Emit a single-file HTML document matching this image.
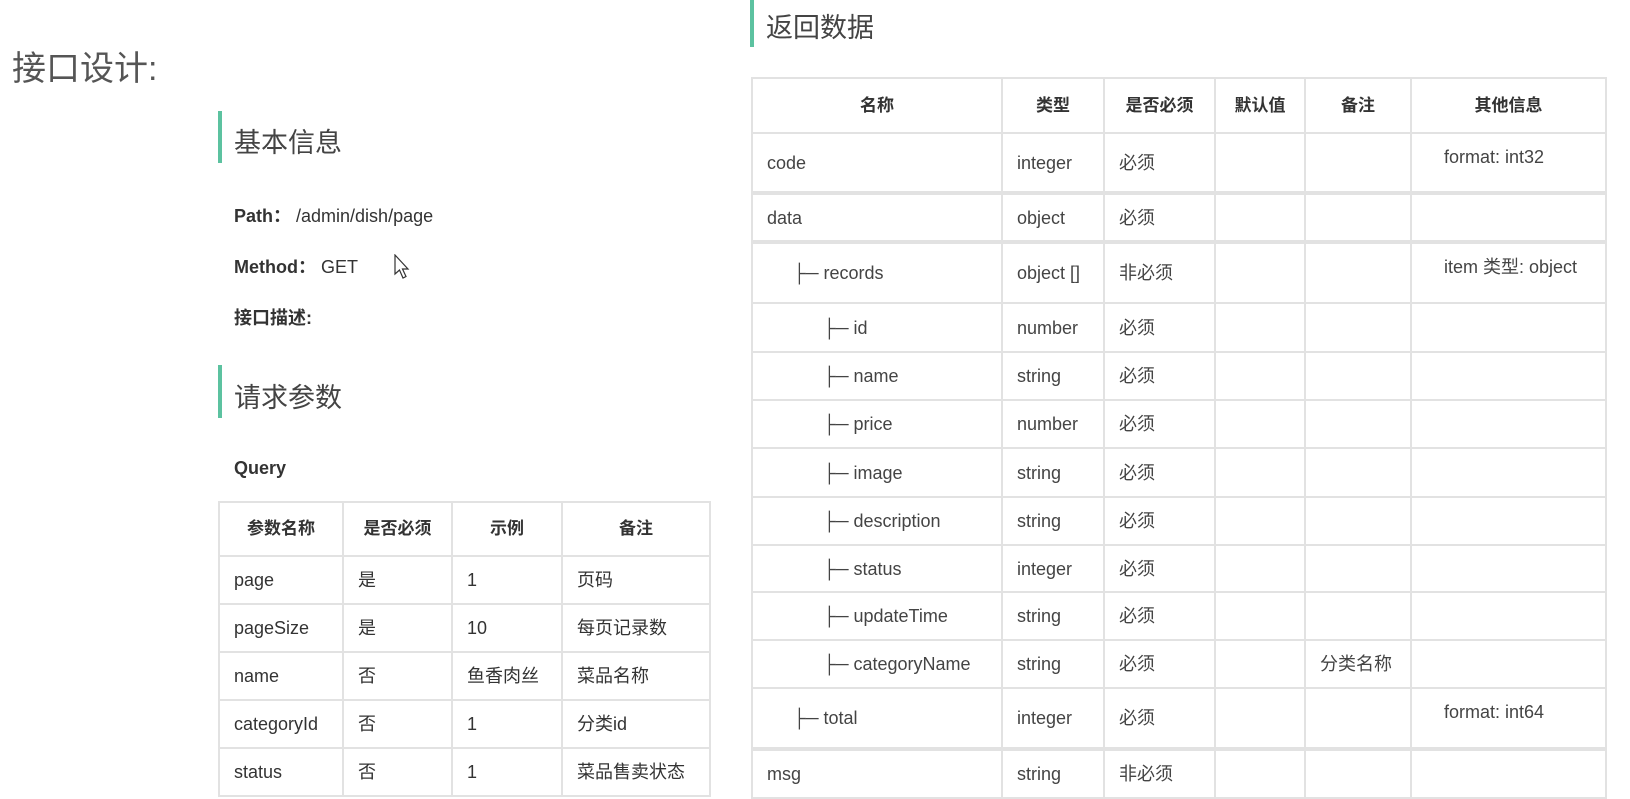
<!DOCTYPE html>
<html><head><meta charset="utf-8"><style>
body{margin:0;width:1630px;height:797px;background:#fff;overflow:hidden;position:relative;font-family:"Liberation Sans","Noto Sans CJK SC",sans-serif;color:#333}
.a{position:absolute;white-space:nowrap}
.bar{position:absolute;width:4px;background:#5cc2a0}
table{position:absolute;border-collapse:collapse;table-layout:fixed}
td,th{border:2px solid #e2e2e2;font-size:18px;line-height:22px;color:#333;padding:0 0 0 14px;text-align:left;white-space:nowrap;vertical-align:middle}
th{text-align:center;padding:0;font-weight:bold;font-size:17px}
.t2 td{font-size:18px;color:#444}
.top{vertical-align:top;padding-top:12px;padding-left:32px}
.thick td{border-top:4px solid #e2e2e2}
</style></head><body>
<div class="a" style="left:12px;top:41px;font-size:34px;color:#555">接口设计:</div>
<div class="bar" style="left:218px;top:111px;height:52px"></div>
<div class="a" style="left:234px;top:121px;font-size:27px;color:#444">基本信息</div>
<div class="a" style="left:234px;top:202px;font-size:18px"><b>Path：</b>&nbsp;/admin/dish/page</div>
<div class="a" style="left:234px;top:253px;font-size:18px"><b>Method：</b>&nbsp;GET</div>
<svg class="a" style="left:394px;top:254px" width="20" height="28" viewBox="0 0 20 28"><path d="M1 1 L1 20 L5.5 16 L9 24 L12 22.5 L8.5 15 L14 15 Z" fill="#fff" stroke="#333" stroke-width="1.2"/></svg>
<div class="a" style="left:234px;top:304px;font-size:18px;font-weight:bold">接口描述:</div>
<div class="bar" style="left:218px;top:365px;height:53px"></div>
<div class="a" style="left:234px;top:376px;font-size:27px;color:#444">请求参数</div>
<div class="a" style="left:234px;top:458px;font-size:18px;font-weight:bold">Query</div>
<table style="left:218px;top:501px;width:491px">
<colgroup><col style="width:124px"><col style="width:109px"><col style="width:110px"><col style="width:148px"></colgroup>
<tr style="height:54px"><th>参数名称</th><th>是否必须</th><th>示例</th><th>备注</th></tr>
<tr style="height:48px"><td>page</td><td>是</td><td>1</td><td>页码</td></tr>
<tr style="height:48px"><td>pageSize</td><td>是</td><td>10</td><td>每页记录数</td></tr>
<tr style="height:48px"><td>name</td><td>否</td><td>鱼香肉丝</td><td>菜品名称</td></tr>
<tr style="height:48px"><td>categoryId</td><td>否</td><td>1</td><td>分类id</td></tr>
<tr style="height:48px"><td>status</td><td>否</td><td>1</td><td>菜品售卖状态</td></tr>
</table>
<div class="bar" style="left:750px;top:0;height:47px"></div>
<div class="a" style="left:766px;top:6px;font-size:27px;color:#444">返回数据</div>
<table class="t2" style="left:751px;top:77px;width:854px">
<colgroup><col style="width:250px"><col style="width:102px"><col style="width:111px"><col style="width:90px"><col style="width:106px"><col style="width:195px"></colgroup>
<tr style="height:55px"><th>名称</th><th>类型</th><th>是否必须</th><th>默认值</th><th>备注</th><th>其他信息</th></tr>
<tr style="height:60px"><td>code</td><td>integer</td><td>必须</td><td></td><td></td><td class="top">format: int32</td></tr>
<tr class="thick" style="height:49px"><td>data</td><td>object</td><td>必须</td><td></td><td></td><td></td></tr>
<tr class="thick" style="height:61px"><td style="padding-left:40px">├─ records</td><td>object []</td><td>非必须</td><td></td><td></td><td class="top">item 类型: object</td></tr>
<tr style="height:49px"><td style="padding-left:70px">├─ id</td><td>number</td><td>必须</td><td></td><td></td><td></td></tr>
<tr style="height:48px"><td style="padding-left:70px">├─ name</td><td>string</td><td>必须</td><td></td><td></td><td></td></tr>
<tr style="height:48px"><td style="padding-left:70px">├─ price</td><td>number</td><td>必须</td><td></td><td></td><td></td></tr>
<tr style="height:49px"><td style="padding-left:70px">├─ image</td><td>string</td><td>必须</td><td></td><td></td><td></td></tr>
<tr style="height:48px"><td style="padding-left:70px">├─ description</td><td>string</td><td>必须</td><td></td><td></td><td></td></tr>
<tr style="height:47px"><td style="padding-left:70px">├─ status</td><td>integer</td><td>必须</td><td></td><td></td><td></td></tr>
<tr style="height:48px"><td style="padding-left:70px">├─ updateTime</td><td>string</td><td>必须</td><td></td><td></td><td></td></tr>
<tr style="height:48px"><td style="padding-left:70px">├─ categoryName</td><td>string</td><td>必须</td><td></td><td>分类名称</td><td></td></tr>
<tr style="height:61px"><td style="padding-left:40px">├─ total</td><td>integer</td><td>必须</td><td></td><td></td><td class="top">format: int64</td></tr>
<tr class="thick" style="height:49px"><td>msg</td><td>string</td><td>非必须</td><td></td><td></td><td></td></tr>
</table>
</body></html>
